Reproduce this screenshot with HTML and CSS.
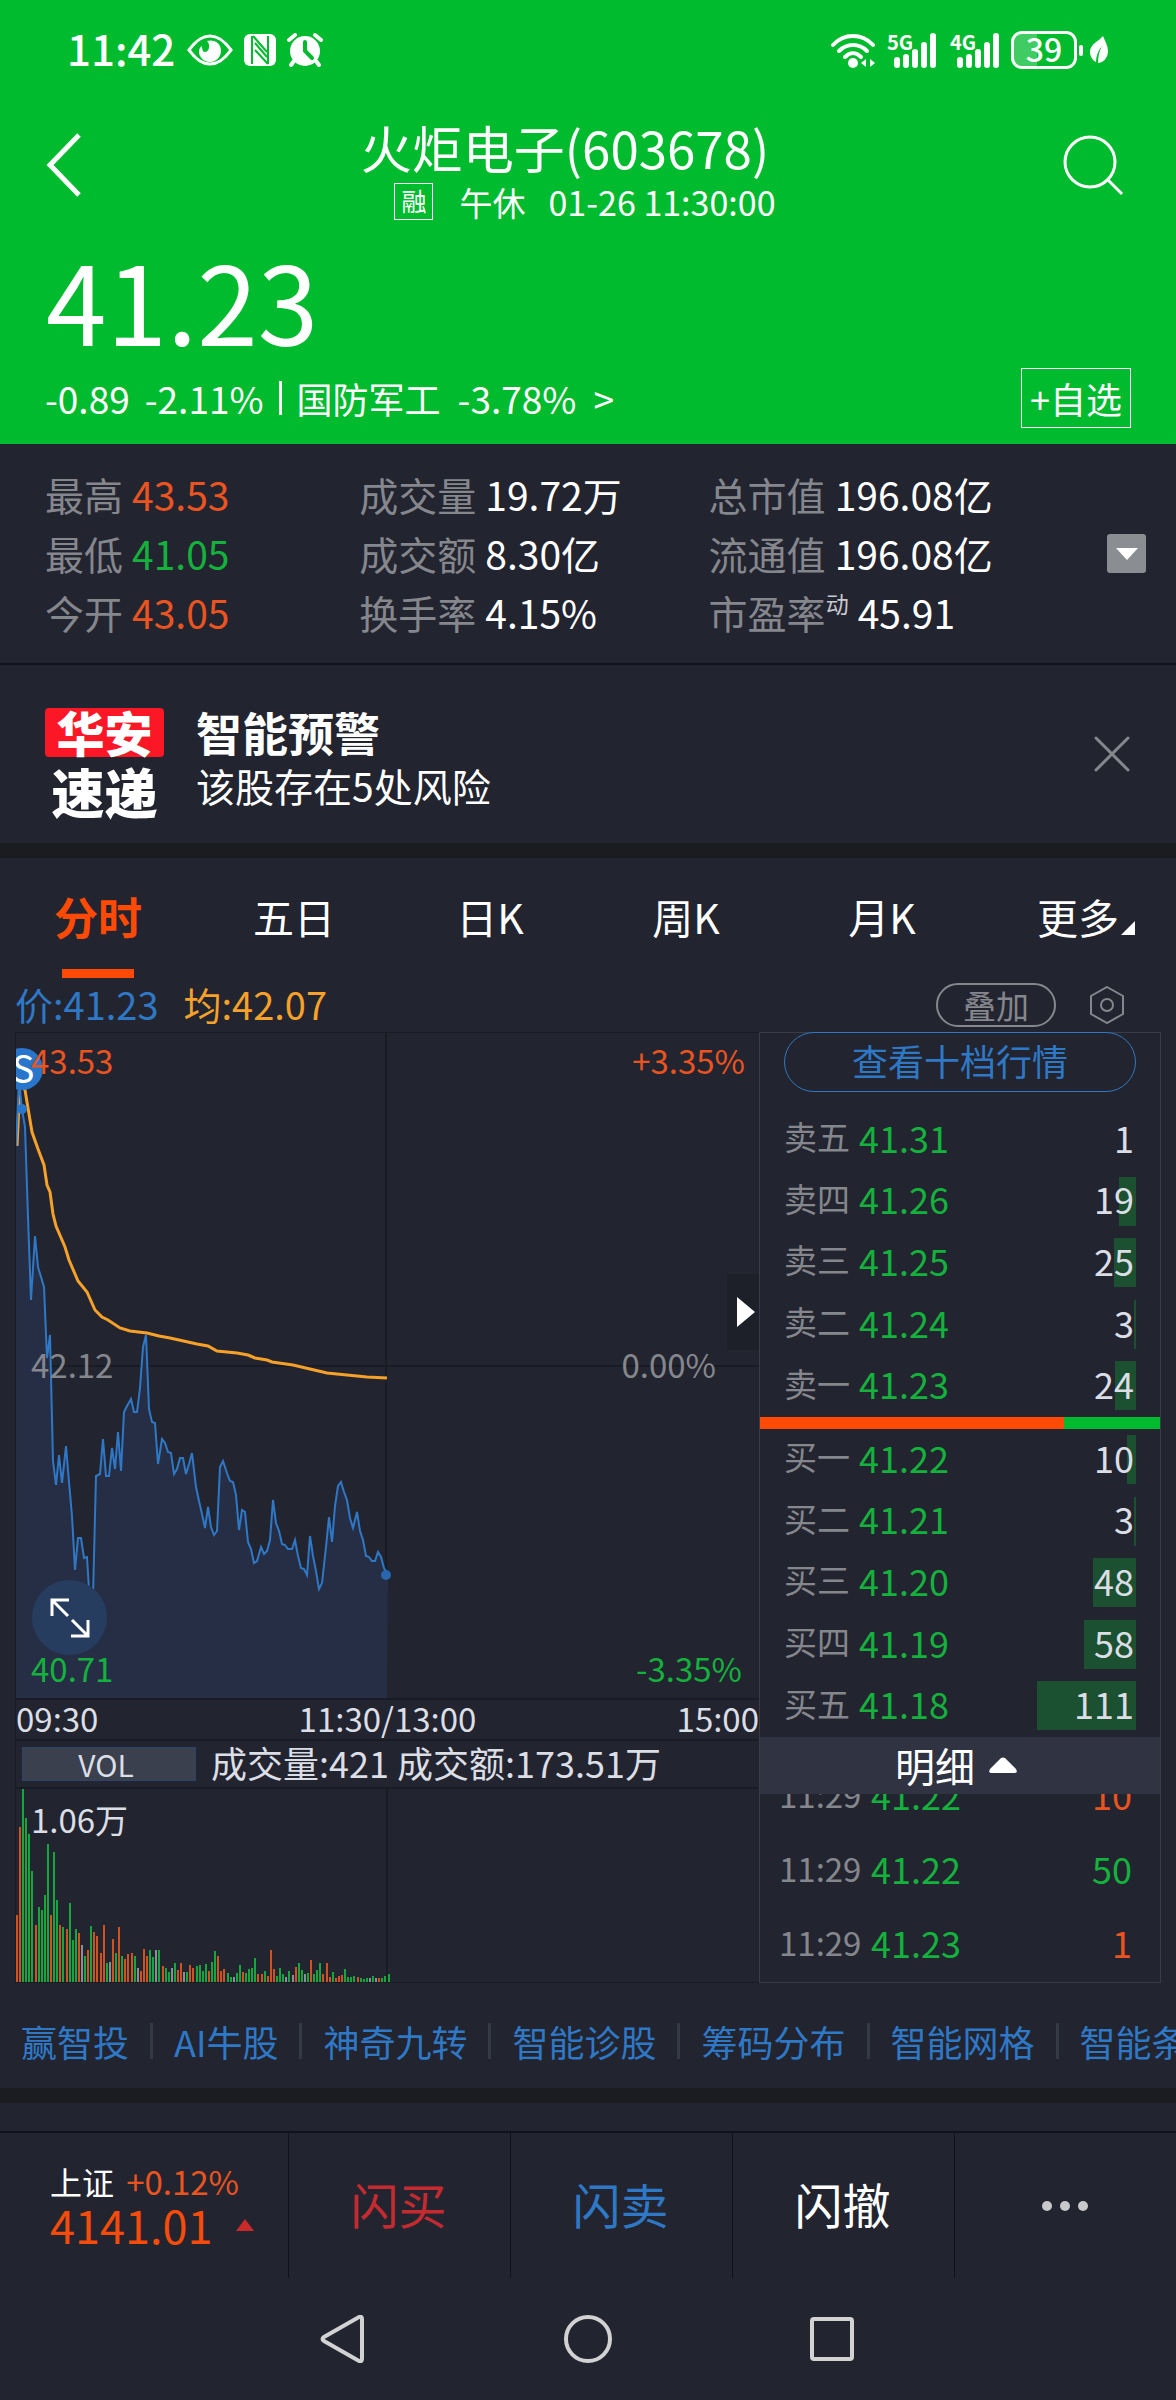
FILE: index.html
```html
<!DOCTYPE html>
<html lang="zh-CN">
<head>
    <meta charset="UTF-8">
    <meta name="viewport" content="width=device-width, initial-scale=1.0">
    <title>火炬电子(603678)</title>
    <link rel="stylesheet" href="styles.css">
</head>
<body>
    <header class="top">
        <div class="status">
            <span class="clock">11:42</span>
            <svg class="st-eye" width="46" height="32" viewBox="0 0 46 32">
                <path d="M2 16C10 5 16 2 23 2s13 3 21 14C36 27 30 30 23 30S10 27 2 16z" fill="none" stroke="#fff" stroke-width="3"/>
                <path d="M20 7c7-2 14 2 14 10 0 6-5 11-11 11s-11-5-11-10c0-3 1-5 3-6 0 4 1 6 3 6 4 0 6-7 2-11z" fill="#fff"/>
            </svg>
            <svg class="st-nfc" width="32" height="32" viewBox="0 0 32 32">
                <rect width="32" height="32" rx="6" fill="#fff"/>
                <path d="M8 2v28M24 2v28" stroke="#00bb2e" stroke-width="2"/>
                <path d="M9 2l14 16M11 9l12 14M11 16l13 14" stroke="#00bb2e" stroke-width="2"/>
            </svg>
            <svg class="st-alarm" width="36" height="34" viewBox="0 0 36 34">
                <circle cx="18" cy="18" r="15" fill="#fff"/>
                <path d="M2 7l6-5M34 7l-6-5M7 28l-3 4M29 28l3 4" stroke="#fff" stroke-width="4" stroke-linecap="round"/>
                <path d="M18 9v9l7 7" fill="none" stroke="#00bb2e" stroke-width="4" stroke-linecap="round"/>
            </svg>
            <svg class="st-wifi" width="44" height="35" viewBox="0 0 44 35">
                <g fill="none" stroke="#fff" stroke-width="4" stroke-linecap="round">
                    <path d="M2 12c11-12 29-12 40 0"/>
                    <path d="M8 18c8-8 20-8 28 0"/>
                    <path d="M14 24c5-5 11-5 16 0"/>
                </g>
                <circle cx="22" cy="30" r="5" fill="#fff"/>
                <path d="M30 30l5-4v8zM44 30l-5-4v8z" fill="#fff"/>
            </svg>
            <svg class="st-signal" width="51" height="36" viewBox="0 0 51 36">
                <text x="0" y="18" class="net">5G</text>
                <path d="M10 28v5M19 25v8M28 20v13M37 13v20M46 4v29" stroke="#fff" stroke-width="6" stroke-linecap="round"/>
            </svg>
            <svg class="st-signal" width="51" height="36" viewBox="0 0 51 36">
                <text x="0" y="18" class="net">4G</text>
                <path d="M10 28v5M19 25v8M28 20v13M37 13v20M46 4v29" stroke="#fff" stroke-width="6" stroke-linecap="round"/>
            </svg>
            <span class="battery">39</span>
            <svg class="st-leaf" width="18" height="28" viewBox="0 0 18 28">
                <path d="M13 0c2 5 5 10 5 15 0 7-5 12-10 12 0-6 1-11 4-17-4 5-6 10-6 16C2 24 0 20 0 16 0 8 8 6 13 0z" fill="#fff"/>
            </svg>
        </div>

        <div class="title-bar">
            <button class="icon-btn" aria-label="返回">
                <svg width="36" height="66" viewBox="0 0 36 66"><path d="M33 3L4 33l29 30" fill="none" stroke="#fff" stroke-width="5"/></svg>
            </button>
            <div class="title">
                <h1>火炬电子(603678)</h1>
                <p><span class="rong">融</span><span class="state">午休</span><time>01-26 11:30:00</time></p>
            </div>
            <button class="icon-btn" aria-label="搜索">
                <svg width="62" height="62" viewBox="0 0 62 62"><circle cx="28" cy="28" r="25" fill="none" stroke="#fff" stroke-width="3"/><path d="M45 45l15 15" stroke="#fff" stroke-width="3"/></svg>
            </button>
        </div>

        <div class="price">41.23</div>
        <div class="change">
            <span>-0.89</span><span>-2.11%</span><i class="bar-sep"></i>
            <a href="#industry"><span class="industry">国防军工</span><span>-3.78%</span><span>&gt;</span></a>
            <button class="add">+自选</button>
        </div>
    </header>

    <section class="stats">
        <dl>
            <div><dt>最高</dt><dd class="up">43.53</dd></div>
            <div><dt>成交量</dt><dd>19.72万</dd></div>
            <div><dt>总市值</dt><dd>196.08亿</dd></div>
            <div><dt>最低</dt><dd class="down">41.05</dd></div>
            <div><dt>成交额</dt><dd>8.30亿</dd></div>
            <div><dt>流通值</dt><dd>196.08亿</dd></div>
            <div><dt>今开</dt><dd class="up">43.05</dd></div>
            <div><dt>换手率</dt><dd>4.15%</dd></div>
            <div><dt>市盈率<sup>动</sup></dt><dd>45.91</dd></div>
        </dl>
        <button class="expand" aria-label="展开">
            <svg width="22" height="12" viewBox="0 0 22 12"><path d="M0 0h22L11 12z" fill="#fff"/></svg>
        </button>
    </section>

    <section class="alert">
        <div class="brand"><b class="brand-top">华安</b><b class="brand-bottom">速递</b></div>
        <div class="alert-text">
            <h2>智能预警</h2>
            <p>该股存在5处风险</p>
        </div>
        <button class="icon-btn" aria-label="关闭">
            <svg width="36" height="36" viewBox="0 0 36 36"><path d="M2 2l32 32M34 2L2 34" stroke="#85878d" stroke-width="3" stroke-linecap="round"/></svg>
        </button>
    </section>

    <nav class="tabs">
        <button class="active">分时</button>
        <button>五日</button>
        <button>日K</button>
        <button>周K</button>
        <button>月K</button>
        <button class="more">更多</button>
    </nav>

    <div class="legend">
        <span class="blue">价:41.23</span>
        <span class="yellow">均:42.07</span>
        <button class="overlay-btn">叠加</button>
        <button class="icon-btn" aria-label="设置">
            <svg width="34" height="38" viewBox="0 0 34 38" fill="none" stroke="#85878d" stroke-width="2"><path d="M17 1l16 9v18l-16 9-16-9V10z"/><circle cx="17" cy="19" r="6"/></svg>
        </button>
    </div>

    <main class="quote">
        <div class="charts">
            <div class="minute">
                <svg viewBox="0 0 743 665" preserveAspectRatio="none">
                    <path d="M370 0v665M0 333h743" stroke="#1a1c25" stroke-width="2"/>
                    <polygon id="area" fill="#262e46"/>
                    <polyline id="avg" fill="none" stroke="#f5a12a" stroke-width="3" points="1,113 4,50 9,57 16,99 22,116 28,132 31,152 34,159 37,181 40,193 49,214 53,227 62,248 71,259 79,277 86,284 92,287 104,295 114,298 131,300 143,303 154,305 181,311 192,313 201,318 221,320 232,322 239,325 251,327 256,329 277,332 311,340 351,344 371,345"/>
                    <polyline id="line" fill="none" stroke="#2f78c6" stroke-width="2"/>
                    <circle cx="370" cy="542" r="5" fill="#2867ae"/>
                    <circle cx="6" cy="76" r="5" fill="#2776cb"/>
                    <circle cx="6" cy="36" r="21" fill="#2776cb"/>
                    <text x="7" y="50" class="mark">S</text>
                </svg>
                <span class="lab top-left up">43.53</span>
                <span class="lab top-right up">+3.35%</span>
                <span class="lab mid-left">42.12</span>
                <span class="lab mid-right">0.00%</span>
                <span class="lab bottom-left down">40.71</span>
                <span class="lab bottom-right down">-3.35%</span>
                <button class="zoom" aria-label="全屏">
                    <svg width="40" height="40" viewBox="0 0 40 40" fill="none" stroke="#fff" stroke-width="3"><path d="M2 18V2h17M3 3l15 15M38 22v16H21M37 37L22 22"/></svg>
                </button>
                <button class="fold" aria-label="收起盘口">
                    <svg width="18" height="30" viewBox="0 0 18 30"><path d="M0 0l18 15L0 30z" fill="#fff"/></svg>
                </button>
            </div>
            <div class="axis"><span>09:30</span><span>11:30/13:00</span><span>15:00</span></div>
            <div class="vol-head">
                <button>VOL</button>
                <span>成交量:421 成交额:173.51万</span>
            </div>
            <div class="volume">
                <svg viewBox="0 0 743 193" preserveAspectRatio="none">
                    <path d="M371 0v193" stroke="#1a1c25" stroke-width="2"/>
                    <g id="vols" shape-rendering="crispEdges"></g>
                </svg>
                <span class="lab vol-max">1.06万</span>
            </div>
        </div>

        <div class="book">
            <button class="depth">查看十档行情</button>
            <table class="sell">
                <tr><th>卖五</th><td>41.31</td><td class="qty"><span>1</span></td></tr>
                <tr><th>卖四</th><td>41.26</td><td class="qty"><i style="width:17px"></i><span>19</span></td></tr>
                <tr><th>卖三</th><td>41.25</td><td class="qty"><i style="width:22px"></i><span>25</span></td></tr>
                <tr><th>卖二</th><td>41.24</td><td class="qty"><i style="width:2px"></i><span>3</span></td></tr>
                <tr><th>卖一</th><td>41.23</td><td class="qty"><i style="width:21px"></i><span>24</span></td></tr>
            </table>
            <div class="ratio"><i style="width:76%"></i></div>
            <table class="buy">
                <tr><th>买一</th><td>41.22</td><td class="qty"><i style="width:9px"></i><span>10</span></td></tr>
                <tr><th>买二</th><td>41.21</td><td class="qty"><i style="width:2px"></i><span>3</span></td></tr>
                <tr><th>买三</th><td>41.20</td><td class="qty"><i style="width:43px"></i><span>48</span></td></tr>
                <tr><th>买四</th><td>41.19</td><td class="qty"><i style="width:52px"></i><span>58</span></td></tr>
                <tr><th>买五</th><td>41.18</td><td class="qty"><i style="width:99px"></i><span>111</span></td></tr>
            </table>
            <button class="detail">明细
                <svg width="28" height="16" viewBox="0 0 28 16"><path d="M12 1q2-1 4 0l11 11q2 4-1 4H2q-3 0-1-4z" fill="#fff"/></svg>
            </button>
            <div class="ticks">
                <table>
                    <tr><th>11:29</th><td>41.22</td><td class="up">10</td></tr>
                    <tr><th>11:29</th><td>41.22</td><td>50</td></tr>
                    <tr><th>11:29</th><td>41.23</td><td class="up">1</td></tr>
                </table>
            </div>
        </div>
    </main>

    <nav class="links">
        <a href="#yzt">赢智投</a>
        <a href="#ai">AI牛股</a>
        <a href="#jiuzhuan">神奇九转</a>
        <a href="#zhengu">智能诊股</a>
        <a href="#chouma">筹码分布</a>
        <a href="#wangge">智能网格</a>
        <a href="#tiaojian">智能条件</a>
    </nav>

    <footer class="trade">
        <a class="index" href="#sh">
            <span class="index-name">上证 <em>+0.12%</em></span>
            <span class="index-value">4141.01
                <svg width="18" height="12" viewBox="0 0 18 12"><path d="M9 0l9 12H0z" fill="#cb2a2a"/></svg>
            </span>
        </a>
        <button class="flash-buy">闪买</button>
        <button class="flash-sell">闪卖</button>
        <button>闪撤</button>
        <button class="dots" aria-label="更多">
            <svg width="46" height="10" viewBox="0 0 46 10" fill="#c9c9cb"><circle cx="5" cy="5" r="5"/><circle cx="23" cy="5" r="5"/><circle cx="41" cy="5" r="5"/></svg>
        </button>
    </footer>

    <div class="sysnav">
        <button class="icon-btn" aria-label="系统返回">
            <svg width="48" height="48" viewBox="0 0 48 48"><path d="M39 2q3-1 3 2v40q0 3-3 2L4 26q-3-2 0-4z" fill="none" stroke="#d2d2d2" stroke-width="4"/></svg>
        </button>
        <button class="icon-btn" aria-label="主页">
            <svg width="48" height="48" viewBox="0 0 48 48"><circle cx="24" cy="24" r="22" fill="none" stroke="#d2d2d2" stroke-width="4"/></svg>
        </button>
        <button class="icon-btn" aria-label="最近任务">
            <svg width="48" height="48" viewBox="0 0 48 48"><rect x="4" y="4" width="40" height="40" rx="2" fill="none" stroke="#d2d2d2" stroke-width="4"/></svg>
        </button>
    </div>

    <script src="script.js"></script>
</body>
</html>
```

FILE: styles.css
```css
* {
    box-sizing: border-box;
}
body {
    margin: 0;
    background-color: #22242f;
    color: #fff;
    font-family: "Noto Sans CJK SC", "Noto Sans", sans-serif;
    font-size: 36px;
    line-height: 1;
}
h1, h2, p, dl, dd {
    margin: 0;
    font-weight: 400;
}
button {
    padding: 0;
    border: none;
    background: none;
    color: inherit;
    font: inherit;
    cursor: pointer;
}
a {
    color: inherit;
    text-decoration: none;
}
svg {
    display: block;
}
table {
    width: 100%;
    border-collapse: collapse;
}
th, td {
    padding: 0;
    font-weight: 400;
    text-align: left;
}
.up {
    color: #ea5420;
}
.down {
    color: #14b13d;
}
.blue {
    color: #2f78c6;
}
.yellow {
    color: #f5a12a;
}
.icon-btn {
    display: flex;
    align-items: center;
    justify-content: center;
}

/* header */
.top {
    height: 444px;
    background-color: #00bb2e;
}
.status {
    display: flex;
    align-items: center;
    height: 100px;
    padding: 0 68px 0 67px;
}
.clock {
    margin-right: 12px;
    font-size: 42px;
    font-weight: 500;
    line-height: 48px;
    padding-bottom: 4px;
}
.st-nfc {
    margin: 0 11px;
}
.st-wifi {
    margin-left: auto;
}
.st-signal {
    margin-left: 12px;
    overflow: visible;
}
.net {
    fill: #fff;
    font-size: 20px;
    font-weight: 700;
}
.battery {
    position: relative;
    width: 66px;
    height: 38px;
    margin: 0 13px 0 10px;
    border: 3px solid #fff;
    border-radius: 11px;
    background: linear-gradient(90deg, #40cc62 39%, transparent 39%);
    font-size: 32px;
    font-weight: 500;
    line-height: 28px;
    text-align: center;
}
.battery::after {
    content: "";
    position: absolute;
    top: 11px;
    right: -9px;
    width: 4px;
    height: 11px;
    border-radius: 2px;
    background-color: #fff;
}
.title-bar {
    display: flex;
    align-items: center;
    justify-content: space-between;
    height: 130px;
    padding: 0 52px 0 46px;
}
.title {
    display: flex;
    flex-direction: column;
    align-items: center;
    gap: 6px;
    padding-top: 7px;
    padding-left: 26px;
}
.title h1 {
    padding-right: 40px;
    font-size: 51px;
    line-height: 60px;
}
.title p {
    display: flex;
    align-items: center;
    font-size: 33px;
    line-height: 38px;
}
.title time {
    font-size: 34px;
}
.rong {
    width: 39px;
    height: 37px;
    border: 1px solid #fff;
    font-size: 25px;
    line-height: 32px;
    text-align: center;
}
.state {
    margin: 0 23px 0 26px;
}
.price {
    padding-left: 46px;
    font-size: 109px;
    line-height: 138px;
}
.change {
    display: flex;
    align-items: center;
    gap: 15px;
    height: 60px;
    padding: 0 45px;
    font-size: 37px;
}
.change a {
    display: flex;
    gap: 17px;
}
.industry, .add {
    font-size: 36px;
}
.bar-sep {
    width: 3px;
    height: 34px;
    background-color: #fff;
}
.add {
    width: 110px;
    height: 60px;
    margin-left: auto;
    border: 1px solid #fff;
}

/* key figures */
.stats {
    display: flex;
    align-items: center;
    height: 221px;
    padding: 0 30px 0 45px;
    border-bottom: 2px solid #10111a;
    font-size: 39px;
}
.stats dl {
    display: grid;
    grid-template-columns: 314fr 349fr 398fr;
    flex: 1;
}
.stats dl div {
    display: flex;
    align-items: center;
    height: 59px;
    gap: 9px;
}
.stats dt {
    color: #85878d;
}
.stats sup {
    font-size: 23px;
    line-height: 0;
    vertical-align: 16px;
    color: #c9cad0;
}
.expand {
    display: flex;
    align-items: center;
    justify-content: center;
    width: 39px;
    height: 39px;
    border-radius: 3px;
    background-color: #8a8e92;
}

/* risk alert */
.alert {
    display: flex;
    align-items: center;
    height: 193px;
    padding: 0 46px 0 45px;
    border-bottom: 15px solid #1b1c1f;
}
.brand {
    display: flex;
    flex-direction: column;
    align-items: center;
    width: 119px;
    margin-right: 32px;
    gap: 10px;
    padding-top: 14px;
    font-weight: 900;
}
.brand-top {
    width: 100%;
    height: 49px;
    border-radius: 4px;
    background-color: #fb1726;
    font-size: 48px;
    line-height: 46px;
    text-align: center;
}
.brand-bottom {
    font-size: 53px;
    line-height: 48px;
}
.alert-text {
    flex: 1;
    padding-top: 8px;
}
.alert h2 {
    font-size: 46px;
    font-weight: 700;
    line-height: 54px;
}
.alert p {
    font-size: 39px;
    line-height: 54px;
}

/* chart tabs */
.tabs {
    display: grid;
    grid-template-columns: repeat(6, 1fr);
    height: 120px;
    font-size: 41px;
}
.tabs button {
    position: relative;
    padding-bottom: 4px;
}
.tabs .active {
    color: #ff4a06;
    font-size: 44px;
    font-weight: 700;
}
.tabs .active::after {
    content: "";
    position: absolute;
    left: 50%;
    bottom: 0;
    width: 72px;
    height: 9px;
    margin-left: -36px;
    background-color: #ff4a06;
}
.tabs .more::after {
    content: "";
    position: absolute;
    right: 41px;
    bottom: 43px;
    border: 7px solid transparent;
    border-right-color: #fff;
    border-bottom-color: #fff;
}
.legend {
    display: flex;
    align-items: center;
    height: 54px;
    padding: 0 52px 0 15px;
    gap: 25px;
    font-size: 38px;
}
.legend span {
    padding-bottom: 2px;
}
.overlay-btn {
    width: 120px;
    height: 44px;
    margin-left: auto;
    margin-right: 9px;
    border: 2px solid #85878d;
    border-radius: 22px;
    color: #85878d;
    font-size: 33px;
}

/* charts */
.quote {
    display: grid;
    grid-template-columns: 744fr 402fr;
    padding: 0 15px;
}
.charts {
    border: 1px solid #1a1c25;
    border-right: none;
}
.minute, .volume {
    position: relative;
}
.minute svg, .volume svg {
    width: 100%;
}
.minute > svg {
    height: 665px;
}
.volume > svg {
    height: 193px;
}
.mark {
    fill: #fff;
    font-size: 38px;
    text-anchor: middle;
}
.lab {
    position: absolute;
    font-size: 33px;
    line-height: 36px;
}
.top-left {
    top: 9px;
    left: 15px;
}
.top-right {
    top: 9px;
    right: 14px;
}
.mid-left {
    top: 313px;
    left: 15px;
    color: #85878d;
}
.mid-right {
    top: 313px;
    right: 43px;
    color: #85878d;
}
.bottom-left {
    bottom: 12px;
    left: 15px;
}
.bottom-right {
    bottom: 12px;
    right: 17px;
}
.vol-max {
    top: 12px;
    left: 15px;
    color: #dcdee6;
}
.zoom {
    position: absolute;
    left: 16px;
    bottom: 43px;
    display: flex;
    align-items: center;
    justify-content: center;
    width: 75px;
    height: 75px;
    border-radius: 50%;
    background-color: #263d60;
}
.zoom svg {
    width: 40px;
}
.fold {
    position: absolute;
    top: 241px;
    right: 0;
    display: flex;
    align-items: center;
    justify-content: center;
    width: 32px;
    height: 76px;
    padding-left: 6px;
    background-color: #1e2029;
}
.fold svg {
    width: 18px;
}
.axis {
    display: flex;
    justify-content: space-between;
    height: 43px;
    border-top: 2px solid #1a1c25;
    border-bottom: 2px solid #1a1c25;
    color: #dcdee6;
    font-size: 33px;
    line-height: 36px;
}
.vol-head {
    display: flex;
    align-items: center;
    height: 48px;
    gap: 15px;
    padding-left: 6px;
    border-bottom: 2px solid #1a1c25;
    color: #dcdee6;
}
.vol-head button {
    width: 174px;
    height: 34px;
    padding-right: 6px;
    border: 1px solid #2d4469;
    background-color: #3a404d;
    font-size: 30px;
    line-height: 26px;
}
.vol-head span {
    padding-bottom: 4px;
}

/* order book */
.book {
    display: flex;
    flex-direction: column;
    border: 1px solid #393b46;
}
.depth {
    height: 60px;
    margin: -1px 24px 17px;
    padding-bottom: 4px;
    border: 1px solid #2f78c6;
    border-radius: 30px;
    color: #2f78c6;
}
.book table {
    table-layout: fixed;
    color: #14b13d;
}
.book th, .book td {
    padding-bottom: 6px;
}
.sell, .buy {
    height: 308px;
}
.book th {
    width: 99px;
    padding-left: 24px;
    color: #85878d;
    font-size: 33px;
}
.book .qty {
    position: relative;
    padding-right: 26px;
    color: #dcdee6;
    text-align: right;
}
.qty i {
    position: absolute;
    top: 6px;
    right: 24px;
    height: 49px;
    background-color: #1b5131;
}
.qty span {
    position: relative;
}
.ratio {
    height: 12px;
    background-color: #00bb2e;
}
.ratio i {
    display: block;
    height: 12px;
    background-color: #ff4a06;
}
.detail {
    display: flex;
    align-items: center;
    justify-content: center;
    gap: 14px;
    height: 57px;
    padding-right: 8px;
    padding-bottom: 2px;
    background-color: #303341;
    font-size: 40px;
}
.ticks {
    display: flex;
    flex-direction: column;
    justify-content: flex-end;
    height: 188px;
    overflow: hidden;
}
.ticks tr {
    height: 74px;
}
.ticks th {
    width: 111px;
    padding-left: 19px;
}
.ticks td:last-child {
    padding-right: 28px;
    text-align: right;
}

/* shortcuts */
.links {
    display: flex;
    align-items: center;
    height: 120px;
    padding-top: 11px;
    border-bottom: 15px solid #1b1c1f;
    overflow: hidden;
    white-space: nowrap;
    color: #2f78c6;
}
.links a {
    flex: none;
    padding: 0 21px;
    border-right: 3px solid #353945;
}

/* bottom bar */
.trade {
    display: grid;
    grid-template-columns: 288px repeat(4, 1fr);
    height: 147px;
    margin-top: 28px;
    border-top: 2px solid #10111a;
    font-size: 48px;
}
.trade button {
    display: flex;
    align-items: center;
    justify-content: center;
    padding-right: 2px;
    padding-bottom: 6px;
    border-left: 1px solid #10111a;
}
.trade .dots {
    padding-bottom: 0;
}
.index {
    display: flex;
    flex-direction: column;
    justify-content: center;
    padding-left: 50px;
    padding-bottom: 3px;
}
.index-name {
    font-size: 32px;
    line-height: 42px;
}
.index-name em {
    margin-left: 5px;
    color: #ea5420;
    font-size: 33px;
    font-style: normal;
}
.index-value {
    display: flex;
    align-items: center;
    gap: 24px;
    color: #f54b0b;
    font-size: 45px;
    line-height: 46px;
}
.flash-buy {
    color: #c42b30;
}
.flash-sell {
    color: #2f78c6;
}
.sysnav {
    display: flex;
    align-items: center;
    justify-content: center;
    gap: 196px;
    height: 121px;
}
```

FILE: script.js
```js
// one value per minute from 09:30 to 11:30
const STEP = 743 / 240;

// price line, distance from the top of the chart
const price = [
    113, 48, 76, 94, 184, 267, 203, 234, 244, 254, 325, 302, 428, 452, 422, 450, 413, 449, 483, 537,
    505, 505, 525, 524, 572, 563, 443, 441, 406, 443, 443, 415, 436, 399, 438, 379, 373, 366, 379, 379,
    355, 314, 302, 376, 389, 390, 431, 406, 410, 419, 420, 441, 436, 425, 425, 441, 431, 420, 454, 468,
    481, 495, 474, 494, 502, 498, 434, 428, 440, 448, 449, 462, 497, 477, 479, 509, 516, 530, 528, 514,
    521, 518, 507, 467, 490, 498, 511, 512, 516, 516, 507, 523, 535, 536, 542, 503, 523, 538, 556, 550,
    514, 484, 509, 473, 453, 449, 459, 467, 485, 495, 479, 498, 507, 523, 524, 528, 528, 519, 524, 535, 542
];

// volume bars: r up, g down, w flat
const volume = 'r67 r155 g193 g164 g148 g111 r57 g75 g72 g87 g138 r67 g130 g82 r57 g55 r53 g79 g42 g53 ' +
    'r49 w37 g26 r32 g56 r50 r46 r29 r57 g19 w20 r43 g29 r55 g26 r23 r28 r29 g26 w14 ' +
    'r11 r33 r26 g32 g25 w32 g32 r16 g14 g10 w14 g19 r12 r19 w10 g10 r17 r14 g16 g17 ' +
    'g11 g18 r11 g20 g31 r26 r11 r13 g9 g5 w5 g9 g17 r10 g9 g13 g14 g24 r8 r8 ' +
    'g11 r6 r32 r13 g6 g14 g8 w5 g11 w7 r15 g19 g12 w8 g9 r22 g8 g12 g19 r8 ' +
    'r19 r5 g10 r4 r6 r7 g13 g5 g5 g6 r5 g4 g3 g4 w4 g6 w4 r4 g4 g6 g8';

const colors = { r: '#cf5223', g: '#16a53e', w: '#8c8e93' };

const points = price.map((y, i) => Math.round(i * STEP) + ',' + y).join(' ');
document.getElementById('line').setAttribute('points', points);
document.getElementById('area').setAttribute('points', '0,665 ' + points + ' 371,665');

document.getElementById('vols').innerHTML = volume.split(' ').map((v, i) => {
    const h = Number(v.slice(1));
    return `<rect x="${Math.round(i * STEP)}" y="${193 - h}" width="2" height="${h}" fill="${colors[v[0]]}"/>`;
}).join('');
```
